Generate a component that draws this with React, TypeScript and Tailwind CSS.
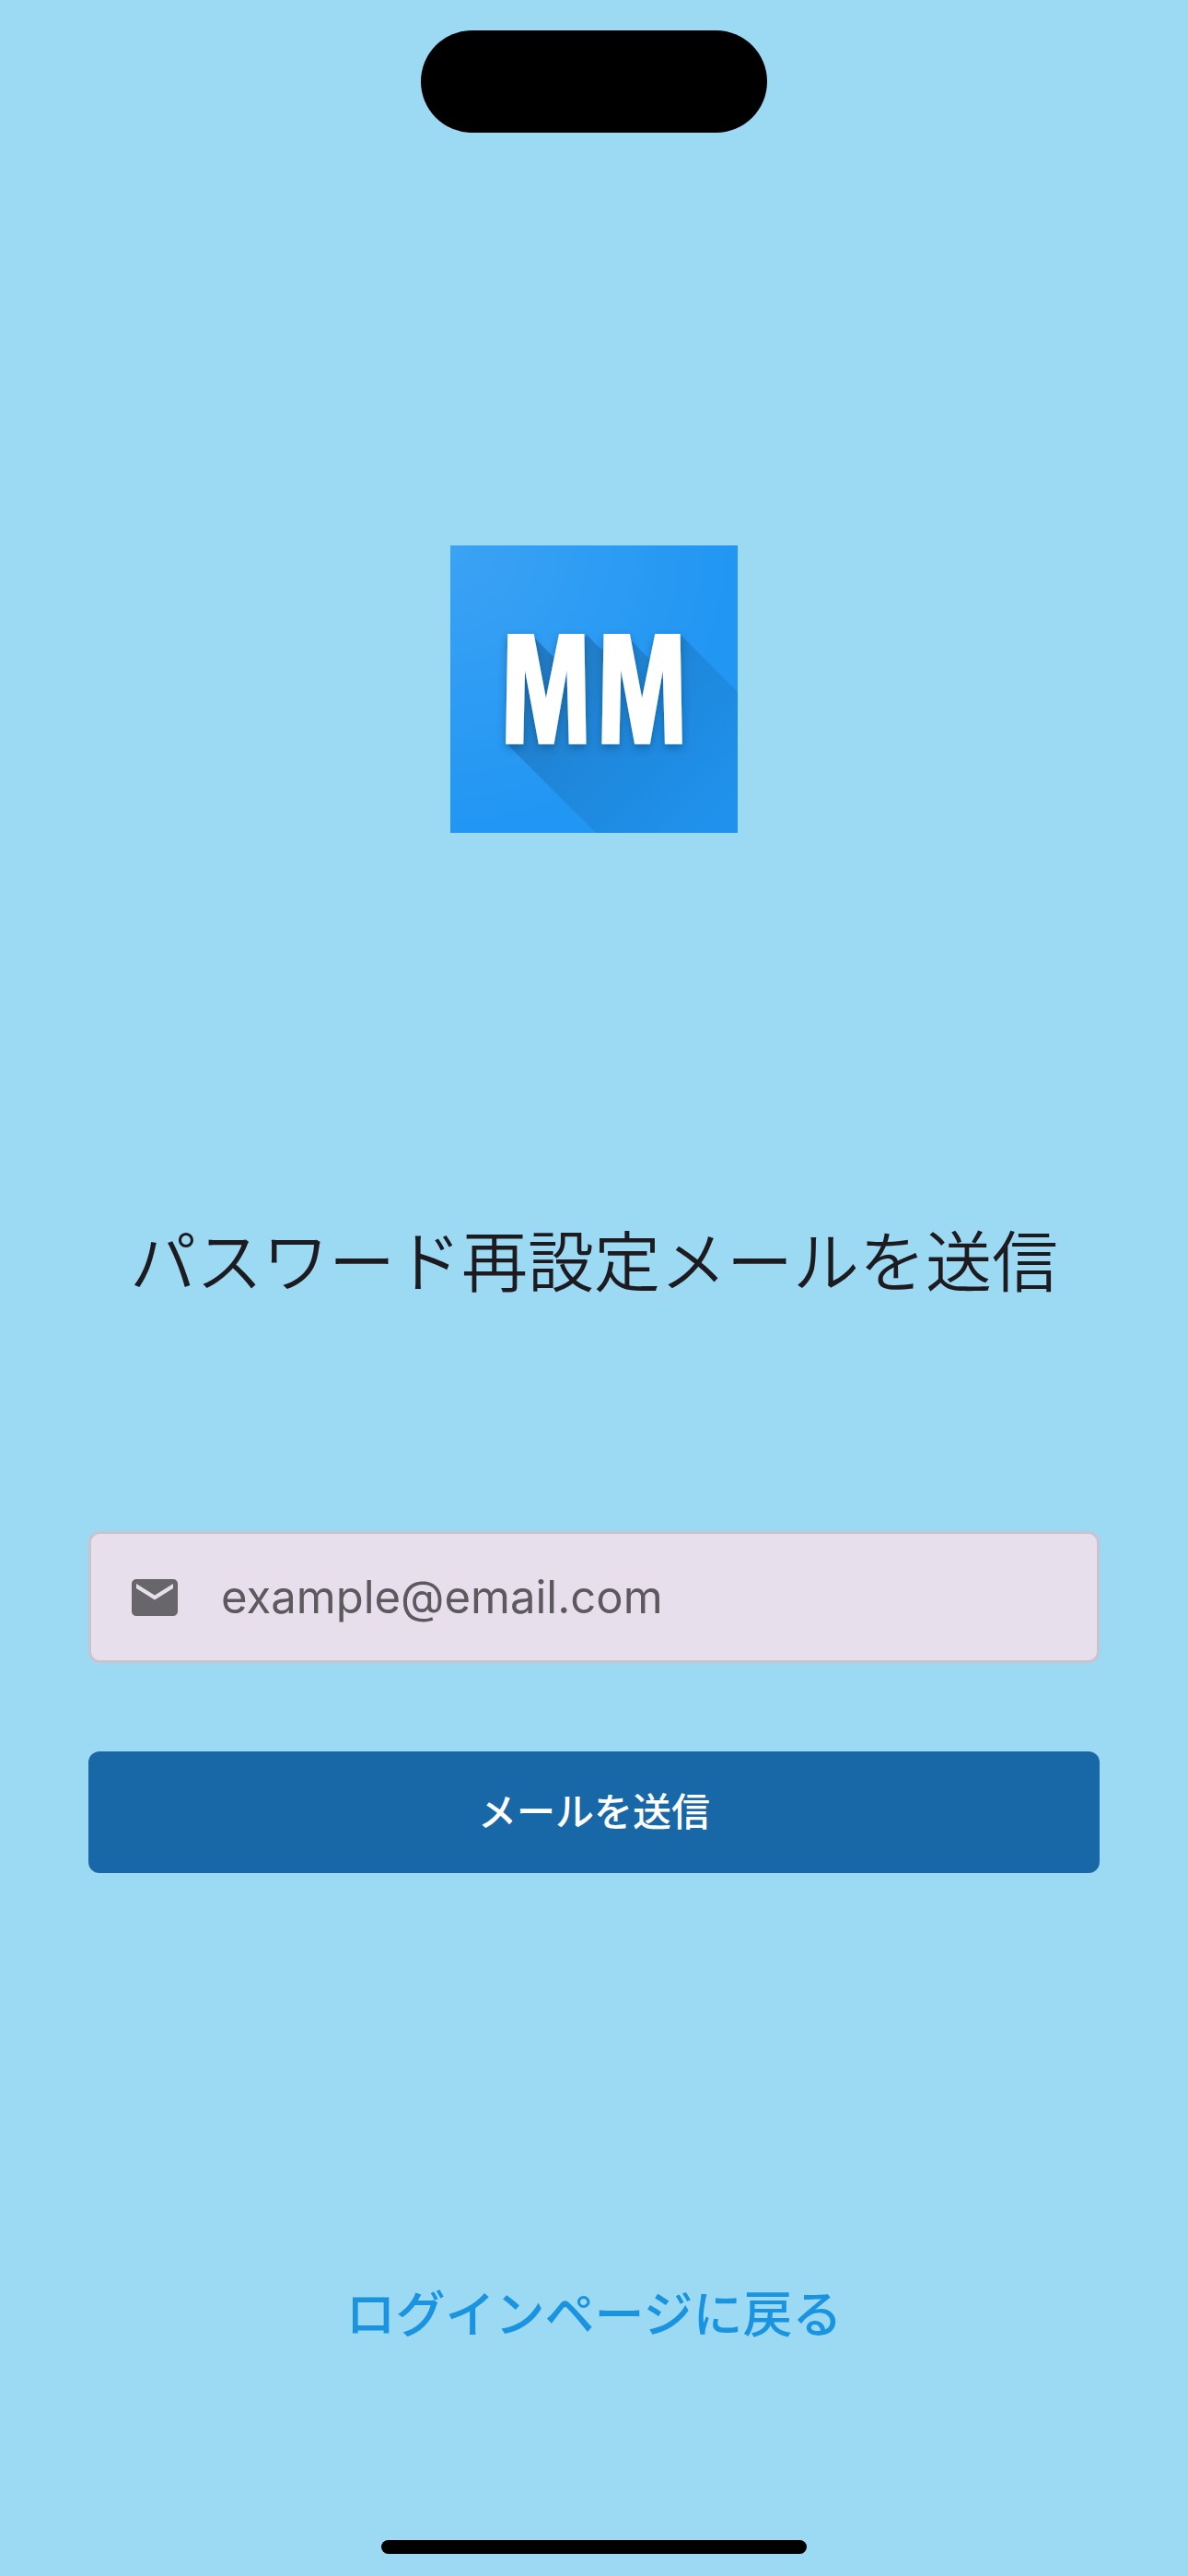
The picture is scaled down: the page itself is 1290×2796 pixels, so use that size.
import React from "react";

function Logo() {
  return (
    <svg className="size-[312px]" viewBox="0 0 312 312" role="img" aria-label="MM">
      <defs>
        <radialGradient id="sheen" cx="0" cy="0" r="1">
          <stop offset="0" stopColor="#fff" stopOpacity="0.12" />
          <stop offset="1" stopColor="#fff" stopOpacity="0" />
        </radialGradient>
        <linearGradient id="long" gradientUnits="userSpaceOnUse" x1="110" y1="110" x2="300" y2="300">
          <stop offset="0" stopColor="#0b3c66" stopOpacity="0.34" />
          <stop offset="0.45" stopColor="#0b3c66" stopOpacity="0.16" />
          <stop offset="1" stopColor="#0b3c66" stopOpacity="0.04" />
        </linearGradient>
        <filter id="drop" x="-20%" y="-20%" width="140%" height="150%">
          <feDropShadow dx="0" dy="4" stdDeviation="5" floodColor="#0b3c66" floodOpacity="0.45" />
        </filter>
      </defs>
      <rect width="312" height="312" fill="#2196f3" />
      <rect width="312" height="312" fill="url(#sheen)" />
      <path
        d="M62 216L158 312H312V159L250 97L225 130L218 125L190 97L164 113L148 97L124 130L116 125L88 97Z"
        fill="url(#long)"
      />
      <text
        x="156"
        y="216"
        textAnchor="middle"
        fill="#fff"
        filter="url(#drop)"
        className="font-['Oswald','Roboto_Condensed',sans-serif] text-[148px] font-bold"
      >
        MM
      </text>
    </svg>
  );
}

export default function App() {
  return (
    <div className="flex min-h-screen flex-col items-center bg-[#9cdaf3] px-24 pt-[33px] pb-6 font-['Inter','Noto_Sans_CJK_JP',sans-serif]">
      <div className="h-[111px] w-[376px] rounded-full bg-black" />

      <main className="mt-[448px] flex w-full flex-col items-center">
        <Logo />
        <h1 className="mt-[408px] text-[72px] leading-[116px] font-[350] whitespace-nowrap text-[#1d1b20]">
          パスワード再設定メールを送信
        </h1>

        <form className="mt-[234px] flex w-full flex-col gap-24" onSubmit={(e) => e.preventDefault()}>
          <label className="flex h-[143px] items-center gap-[42px] rounded-xl border-[3px] border-[#cac4d0] bg-[#e7e0ec] px-[39px]">
            <svg className="size-[60px] shrink-0" viewBox="0 0 24 24" fill="#68656b" aria-hidden="true">
              <path d="M20 4H4c-1.100 0-1.990.9-1.990 2L2 18c0 1.100.9 2 2 2h16c1.100 0 2-.9 2-2V6c0-1.100-.9-2-2-2zm0 4l-8 5-8-5V6l8 5 8-5v2z" />
            </svg>
            <input
              type="email"
              aria-label="メールアドレス"
              placeholder="example@email.com"
              className="min-w-0 flex-1 bg-transparent text-[49px] leading-[72px] text-[#1d1b20] outline-none placeholder:text-[#5c5a5f]"
            />
          </label>
          <button
            type="submit"
            className="h-[132px] rounded-xl bg-[#1867a7] text-[42px] leading-[60px] font-medium text-white"
          >
            メールを送信
          </button>
        </form>
      </main>

      <a
        href="#login"
        className="mt-auto mb-[204px] text-[54px] leading-[80px] font-medium text-[#1a94e1]"
      >
        ログインページに戻る
      </a>
      <div className="h-[15px] w-[462px] rounded-full bg-black" />
    </div>
  );
}
